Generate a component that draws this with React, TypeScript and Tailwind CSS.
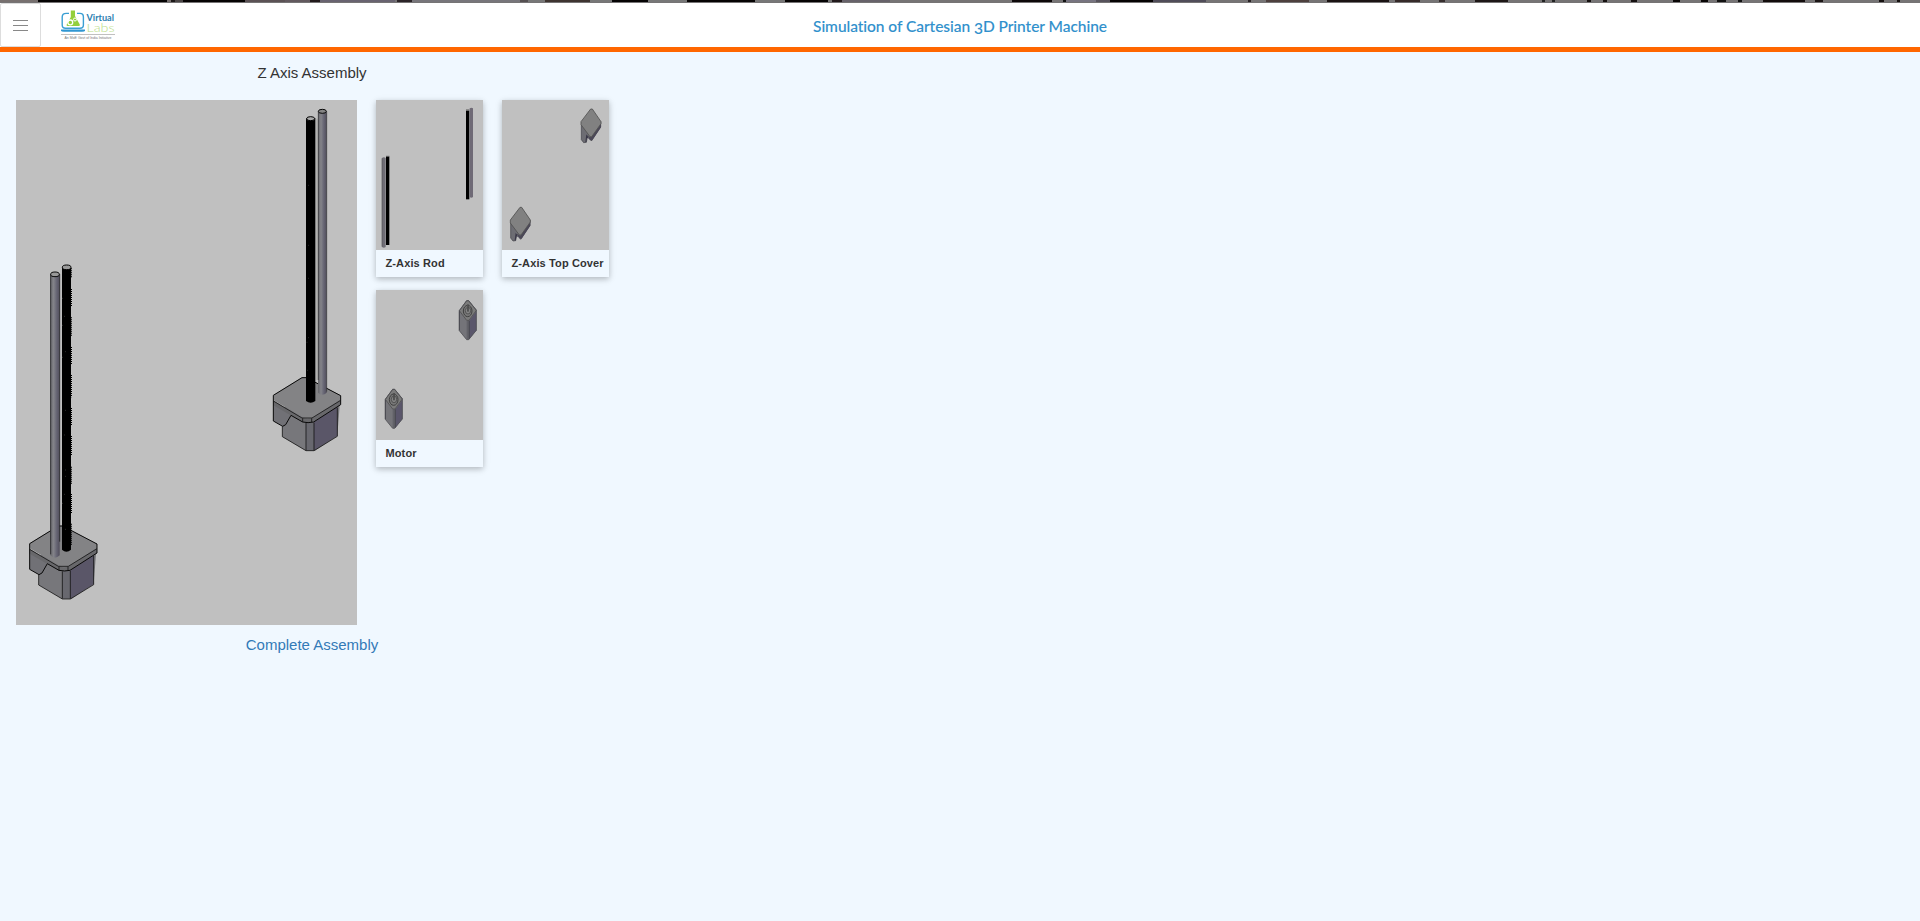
import React from "react";

const STRIP: [number, number, string][] = [
  [0, 38, "#77706f"], [38, 129, "#050303"], [167, 4, "#77706f"], [171, 4, "#1c1818"], [175, 8, "#4b4646"],
  [183, 62, "#050303"], [245, 40, "#5b5255"], [285, 25, "#62595e"], [310, 10, "#221a1c"], [320, 75, "#686370"],
  [397, 15, "#2b2428"], [412, 108, "#77757a"], [520, 8, "#555052"], [528, 17, "#777777"],
  [545, 45, "#3e3430"], [590, 22, "#777777"], [612, 36, "#050303"], [648, 39, "#777777"],
  [687, 68, "#050303"], [755, 30, "#777777"], [785, 43, "#050303"], [828, 4, "#777777"],
  [832, 10, "#221a1c"], [842, 48, "#67626a"],
  [1012, 40, "#0d0809"], [1063, 3, "#111111"], [1066, 30, "#777480"], [1096, 14, "#56525b"], [1110, 43, "#050303"],
  [1153, 53, "#504d59"], [1248, 3, "#292225"], [1266, 43, "#4d403e"], [1327, 62, "#1a1313"],
  [1395, 25, "#352a29"], [1439, 6, "#352d2d"], [1475, 33, "#1d1716"],
  [1542, 3, "#222222"], [1552, 3, "#222222"], [1587, 4, "#151010"], [1603, 4, "#151010"], [1631, 6, "#151010"],
  [1673, 7, "#080505"], [1701, 7, "#080505"], [1717, 9, "#111111"], [1738, 4, "#111111"],
  [1763, 42, "#120c0c"], [1815, 8, "#1b1515"], [1879, 5, "#151010"], [1897, 3, "#151010"],
];

function Banner() {
  return (
    <svg className="block h-[3px] w-full" viewBox="0 0 1920 3" preserveAspectRatio="none">
      <rect width="1920" height="3" fill="#767475" />
      {STRIP.map(([x, w, c]) => <rect key={x} x={x} y="0" width={w} height="2" fill={c} />)}
    </svg>
  );
}

function Logo() {
  return (
    <svg className="block h-[31px] w-[56px] overflow-visible" viewBox="0 0 56 31" fill="none">
      <path d="M9 3.4H6.2Q2.2 3.4 2.2 7V15Q2.2 18.2 5.5 18.2H20Q23.4 18.2 23.4 15V7Q23.4 3.4 20 3.4H17" stroke="#3a9fd3" strokeWidth="1.4" />
      <path d="M1 19.5H25V20.6Q25 21.8 22 21.8H4Q1 21.8 1 20.6Z" fill="#3097d2" />
      <path d="M10.8 0.5H15V6L19.8 14.5Q20.2 16 18.8 16H7.5Q6 16 6.8 14.2L10.8 7Z" fill="#93cf3c" />
      <circle cx="10.3" cy="12.4" r="2.4" stroke="#fff" strokeWidth="1.3" />
      <circle cx="15" cy="9.5" r="1.5" stroke="#fff" strokeWidth="1" />
      <text x="26.5" y="11" fontFamily="Lato, sans-serif" fontSize="9.5" fontWeight="700" fill="#2b7eaf" textLength="27.5" lengthAdjust="spacingAndGlyphs">Virtual</text>
      <text x="26.5" y="22" fontFamily="Lato, sans-serif" fontSize="12" fontWeight="300" fill="#b9dd85" textLength="28" lengthAdjust="spacingAndGlyphs">Labs</text>
      <path d="M1 24.5H55" stroke="#b9b9b9" strokeWidth="0.9" />
      <text x="4.5" y="28.8" fontFamily="Liberation Sans, sans-serif" fontSize="3.6" fill="#777" textLength="47" lengthAdjust="spacingAndGlyphs">An MoE Govt of India Initiative</text>
    </svg>
  );
}

function Base() {
  return (
    <g strokeLinejoin="round">
      <path d="M27 120L40 60H201L192 175L125 220H98L27 178Z" fill="#77777b" />
      <path d="M98 134H122V219H98Z" fill="#68686f" />
      <path d="M122 130L192 87V176L122 219Z" fill="#5a5668" />
      <path d="M0 71L88 126V133L53 113L37 143L28 147L0 131Z" fill="#717176" />
      <path d="M0 53L86 0H99L202 54V66L121 119Q104 127 86 118L0 68Z" fill="#838385" />
      <path d="M0 69L86 121Q104 130 121 120L202 68V82L121 135H88L0 84Z" fill="#68686b" />
      <path d="M0 54L86 1H99L202 55V82L121 134Q104 138 88 134L53 114L37 142L28 147L0 131Z" stroke="#080808" strokeWidth="3" fill="none" />
      <path d="M0 71L86 122H116L202 69M88 123V134M115 123V134M27 147V178L98 220H122L192 177V91M98 137V219M122 136V219" stroke="#111" strokeWidth="2.4" fill="none" />
    </g>
  );
}

function AssemblyDrawing() {
  return (
    <svg className="block h-[525px] w-[341px] shrink-0 bg-[#c0c0c0]" viewBox="0 0 341 525">
      <defs>
        <linearGradient id="steel">
          <stop offset="0" stopColor="#68686c" />
          <stop offset=".35" stopColor="#838389" />
          <stop offset=".65" stopColor="#686775" />
          <stop offset="1" stopColor="#504d5b" />
        </linearGradient>
      </defs>
      <g transform="translate(244 -10) scale(.33333)">
        <g transform="translate(40 862)"><Base /></g>
        <path d="M167 86H174V870H167Z" fill="#b2b2b1" />
        <path d="M174 64H200V908Q187 920 174 908Z" fill="url(#steel)" />
        <path d="M175 64V870M200 64V905" stroke="#303034" strokeWidth="2" />
        <ellipse cx="187" cy="64" rx="12" ry="6" fill="#858585" stroke="#070707" strokeWidth="3" />
        <path d="M138 85H166V933Q152 943 138 933Z" fill="#000" />
        <ellipse cx="152" cy="86" rx="12" ry="6" fill="#aaa" stroke="#000" strokeWidth="3" />
        <path d="M144 286h2M144 466h2M144 565h2M144 743h2M140 757h2M141 841h2" stroke="#555" strokeWidth="2" />
      </g>
      <g transform="translate(-6 155) scale(.33333)">
        <g transform="translate(59 812)"><Base /></g>
        <path d="M121 57H149V901Q135 915 121 901Z" fill="url(#steel)" />
        <path d="M122 57V898M149 57V860" stroke="#242428" strokeWidth="2.5" />
        <ellipse cx="135" cy="58" rx="13" ry="7" fill="#999" stroke="#080808" strokeWidth="3" />
        <path d="M156 37H183V884Q169 896 156 884Z" fill="#000" />
        <path d="M184 40V68M184 102V153M184 187V243M184 276V327M184 360V427M184 459V513M184 543V602M184 635V688M184 717V777M184 806V872" stroke="#000" strokeWidth="4" strokeDasharray="3 3" />
        <ellipse cx="170" cy="37" rx="13" ry="7" fill="#9a9a9a" stroke="#000" strokeWidth="3" />
        <path d="M157 130h2M163 184h2M157 211h2M165 290h2M157 307h2M165 466h2M163 540h2M166 645h2M166 664h2M163 718h2M157 745h2M165 823h2" stroke="#666" strokeWidth="2" />
      </g>
    </svg>
  );
}

function RodDrawing() {
  return (
    <>
      <path d="M18 174Q23 170 29 174V441Q23 445 18 441Z" fill="#6f6d75" />
      <path d="M18 175V440" stroke="#4f4f53" strokeWidth="2" />
      <path d="M30 170H40V435H30Z" fill="#000" />
      <path d="M30 169H40" stroke="#555" strokeWidth="3" />
      <path d="M270 32H280V298H270Z" fill="#000" />
      <path d="M270 30H280" stroke="#555" strokeWidth="3" />
      <path d="M281 25Q286 21 291 25V291Q286 295 281 291Z" fill="#6f6a76" />
    </>
  );
}

function Cover() {
  return (
    <g strokeLinejoin="round">
      <path d="M2 48V93L9 102L17 101L21 81L32 97L60 55V39Z" fill="#6d6d73" stroke="#414147" strokeWidth="2" />
      <path d="M14 100L17 77L26 91L19 87L17 101Z" fill="#393747" />
      <path d="M31 86L61 44V56L35 95L27 94L22 82Z" fill="#4b4857" />
      <path d="M30 1H35L61 39V45L33 84H28L1 48V39Z" fill="#818181" stroke="#505050" strokeWidth="2.5" />
    </g>
  );
}

function CoverDrawing() {
  return (
    <>
      <g transform="translate(236 26)"><Cover /></g>
      <g transform="translate(24 321)"><Cover /></g>
    </>
  );
}

function MotorBody() {
  return (
    <g strokeLinejoin="round">
      <path d="M23 1H29L52 29V90L29 118H23L1 91V31Z" fill="#747479" />
      <path d="M31 61L52 32V90L31 116Z" fill="#5a566b" />
      <path d="M23 61H31V117H23Z" fill="#626268" />
      <path d="M23 1H29L52 30L30 60H23L1 31Z" fill="#7b7b7b" stroke="#505052" strokeWidth="2.5" />
      <path d="M23 1H29L52 29V90L29 118H23L1 91V31Z" fill="none" stroke="#505055" strokeWidth="2.5" />
      <path d="M1 33V90M31 61V115" stroke="#3b3b42" strokeWidth="2" />
      <ellipse cx="26" cy="32" rx="13" ry="17" fill="#777" stroke="#404040" strokeWidth="3" />
      <ellipse cx="27" cy="31" rx="8" ry="10" fill="#858585" stroke="#4b4b4b" strokeWidth="2.5" />
      <path d="M24 12H29V33H24Z" fill="#747474" />
      <path d="M27 12V34" stroke="#303030" strokeWidth="3" />
    </g>
  );
}

function MotorDrawing() {
  return (
    <>
      <g transform="translate(249 31)"><MotorBody /></g>
      <g transform="translate(27 297)"><MotorBody /></g>
    </>
  );
}

function PartCard({ name, children }: { name: string; children: React.ReactNode }) {
  return (
    <div className="h-[177px] w-[107px] bg-[#f0f8ff] shadow-[0_2px_5px_rgba(0,0,0,0.16),0_2px_8px_rgba(0,0,0,0.12)]">
      <svg className="block h-[150px] w-[107px] bg-[#c0c0c0]" viewBox="0 0 321 450">{children}</svg>
      <p className="pl-[9.5px] pt-[5px] text-[11px] font-bold leading-4 tracking-[0.12px] whitespace-nowrap text-[#333]">{name}</p>
    </div>
  );
}

export default function App() {
  return (
    <div className="h-[921px] overflow-hidden bg-[#f0f8ff] font-['Liberation_Sans',Arial,sans-serif]">
      <Banner />
      <header className="grid h-[49px] grid-cols-[1fr_auto_1fr] border-b-[5px] border-[#ff6600] bg-white">
        <div className="flex">
          <button aria-label="Menu" className="flex h-[44px] w-[41px] items-center justify-center rounded-[2px] border border-[#ddd]">
            <svg className="block h-[13px] w-[15px]" viewBox="0 0 15 13" stroke="#888" strokeWidth="1">
              <path d="M0 1.5H15M0 6.5H15M0 11.5H15" />
            </svg>
          </button>
          <div className="pl-[19px] pt-[7px]"><Logo /></div>
        </div>
        <h1 className="pt-[11px] text-center font-['Lato',sans-serif] text-[15.5px] font-medium leading-[24px] tracking-[-0.04px] whitespace-nowrap text-[#3090cc] [-webkit-text-stroke:0.1px_#3090cc]">
          Simulation of Cartesian <span className="inline-block translate-y-[2px]">3</span>D Printer Machine
        </h1>
        <div />
      </header>
      <main className="w-[624px] px-4">
        <h2 className="h-[48px] pt-[10px] text-center text-[15px] leading-[22px] text-[#333]">Z Axis Assembly</h2>
        <div className="flex items-start gap-[19px]">
          <AssemblyDrawing />
          <div className="grid shrink-0 grid-cols-[107px_107px] gap-x-[19px] gap-y-[13px]">
            <PartCard name="Z-Axis Rod"><RodDrawing /></PartCard>
            <PartCard name="Z-Axis Top Cover"><CoverDrawing /></PartCard>
            <PartCard name="Motor"><MotorDrawing /></PartCard>
          </div>
        </div>
        <p className="pt-[9px] text-center text-[15px] leading-[22px] text-[#337ab7]">Complete Assembly</p>
      </main>
    </div>
  );
}
